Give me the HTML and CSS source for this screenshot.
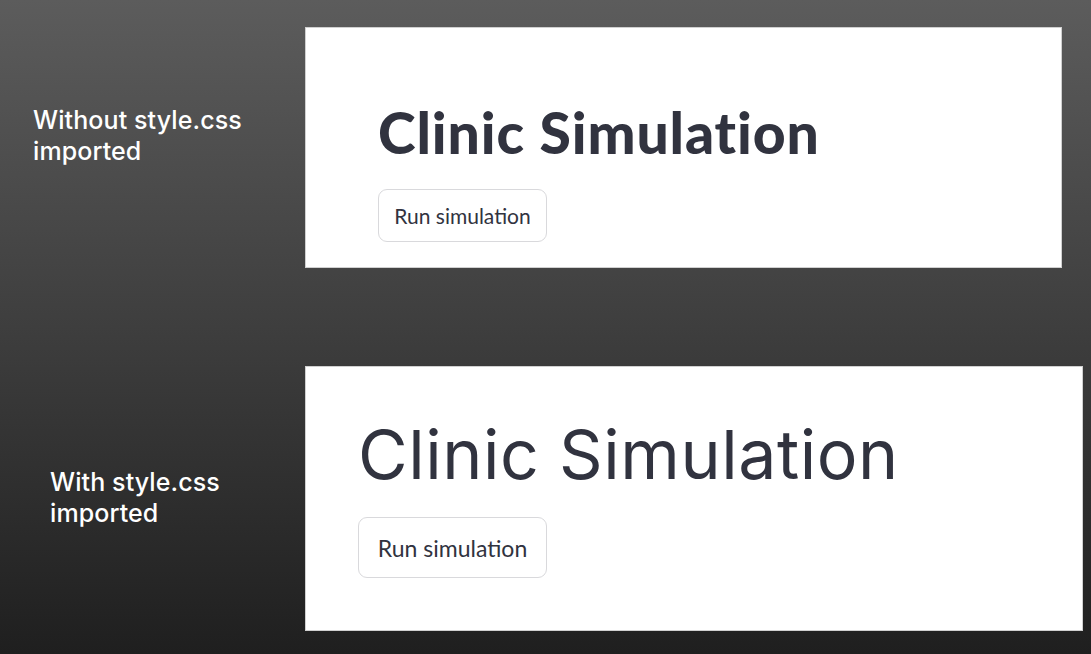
FILE: index.html
```html
<!DOCTYPE html>
<html>
<head>
<meta charset="utf-8">
<link rel="stylesheet" href="styles.css">
</head>
<body>
  <main class="slide">
    <section class="row row-one">
      <div class="label label-one">Without style.css<br>imported</div>
      <div class="panel panel-one">
        <h1 class="title title-plain">Clinic Simulation</h1>
        <button class="btn btn-one">Run simulation</button>
      </div>
    </section>
    <section class="row row-two">
      <div class="label label-two">With style.css<br>imported</div>
      <div class="panel panel-two">
        <h1 class="title title-styled">Clinic Simulation</h1>
        <button class="btn btn-two">Run simulation</button>
      </div>
    </section>
  </main>
</body>
</html>
```

FILE: styles.css
```css
* { box-sizing: border-box; }
html, body { margin: 0; padding: 0; }
body {
  width: 1091px;
  height: 654px;
  overflow: hidden;
  background: linear-gradient(180deg, #5c5c5c 0%, #3e3e3e 50%, #1f1f1f 100%);
}
.slide {
  display: flex;
  flex-direction: column;
  gap: 98px;
  padding-top: 27px;
}
.row {
  display: flex;
  align-items: flex-start;
}
.label {
  width: 305px;
  flex: none;
  color: #ffffff;
  font-family: "Inter", "Open Sans", sans-serif;
  font-weight: 500;
  font-size: 25px;
  line-height: 31px;
  letter-spacing: 0.1px;
}
.label-one { padding-left: 33px; margin-top: 78px; }
.label-two { padding-left: 50px; margin-top: 101px; }
.panel {
  background: #ffffff;
  border: 1px solid #d0d0d0;
  display: flex;
  flex-direction: column;
  align-items: flex-start;
}
.panel-one {
  width: 757px;
  height: 241px;
  padding: 69px 0 0 72px;
}
.panel-two {
  width: 778px;
  height: 265px;
  padding: 42px 0 0 52px;
}
.title {
  margin: 0;
  color: #31333f;
}
.title-plain {
  font-family: "Lato", "Open Sans", sans-serif;
  font-weight: 900;
  font-size: 57px;
  line-height: 70px;
  letter-spacing: 0.9px;
}
.title-styled {
  font-family: "Inter", "Open Sans", sans-serif;
  font-weight: 400;
  font-size: 68px;
  line-height: 90px;
  letter-spacing: 0.55px;
}
.btn {
  background: #ffffff;
  border: 1px solid #d9d9dc;
  border-radius: 9px;
  color: #31333f;
  font-family: "Lato", "Open Sans", sans-serif;
  font-size: 21px;
  padding: 0;
}
.btn-one {
  width: 169px;
  height: 53px;
  margin-top: 22px;
}
.btn-two {
  width: 189px;
  height: 61px;
  margin-top: 18px;
  font-size: 23px;
}
```
